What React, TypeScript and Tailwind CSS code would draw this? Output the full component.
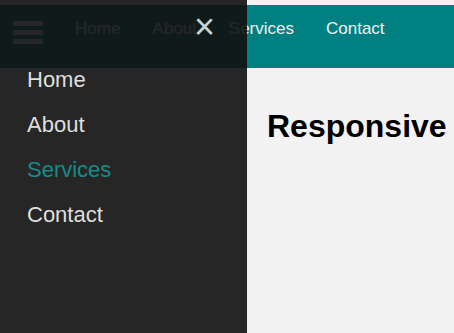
const navLinks = ["Home", "About", "Services", "Contact"];

const sideLinks = [
    { name: "Home", active: false },
    { name: "About", active: false },
    { name: "Services", active: true },
    { name: "Contact", active: false },
];

/**
 * Top navigation bar with the menu toggle.
 */
const Navbar = () => {
    return (
        <div className="mt-[5px] h-[63px] bg-[#008080] flex items-start">
            <div className="ml-[13px] mt-4 flex flex-col gap-1">
                <span className="block w-[30px] h-[5px] bg-[#f2f2f2]" />
                <span className="block w-[30px] h-[5px] bg-[#f2f2f2]" />
                <span className="block w-[30px] h-[5px] bg-[#f2f2f2]" />
            </div>
            <nav className="ml-4 mt-3 flex">
                {navLinks.map((link) => (
                    <a
                        key={link}
                        href="#"
                        className="px-4 text-[17px] leading-6 text-[#f2f2f2] no-underline whitespace-nowrap"
                    >
                        {link}
                    </a>
                ))}
            </nav>
        </div>
    );
};

/**
 * Slide-in side menu, shown open.
 */
const Sidebar = () => {
    return (
        <div className="absolute left-0 top-0 h-full w-[247px] bg-[#111] opacity-90 pt-[57px]">
            <a
                href="#"
                className="absolute left-[194px] top-[6px] text-[36px] leading-[41px] text-[#ddd] no-underline"
            >
                ×
            </a>
            {sideLinks.map((item) => (
                <a
                    key={item.name}
                    href="#"
                    className={`block pl-[27px] py-2.5 text-[22px] leading-[25px] no-underline ${
                        item.active ? "text-[#008080]" : "text-[#ddd]"
                    }`}
                >
                    {item.name}
                </a>
            ))}
        </div>
    );
};

const App = () => {
    return (
        <div className="relative w-full h-screen overflow-hidden bg-[#f2f2f2] font-['Liberation_Sans',Arial,sans-serif]">
            <Navbar />
            <main className="pl-[267px] pt-10">
                <h1 className="text-[32px] leading-[37px] font-bold text-black whitespace-nowrap">
                    Responsive
                </h1>
            </main>
            <Sidebar />
        </div>
    );
};

export default App;
